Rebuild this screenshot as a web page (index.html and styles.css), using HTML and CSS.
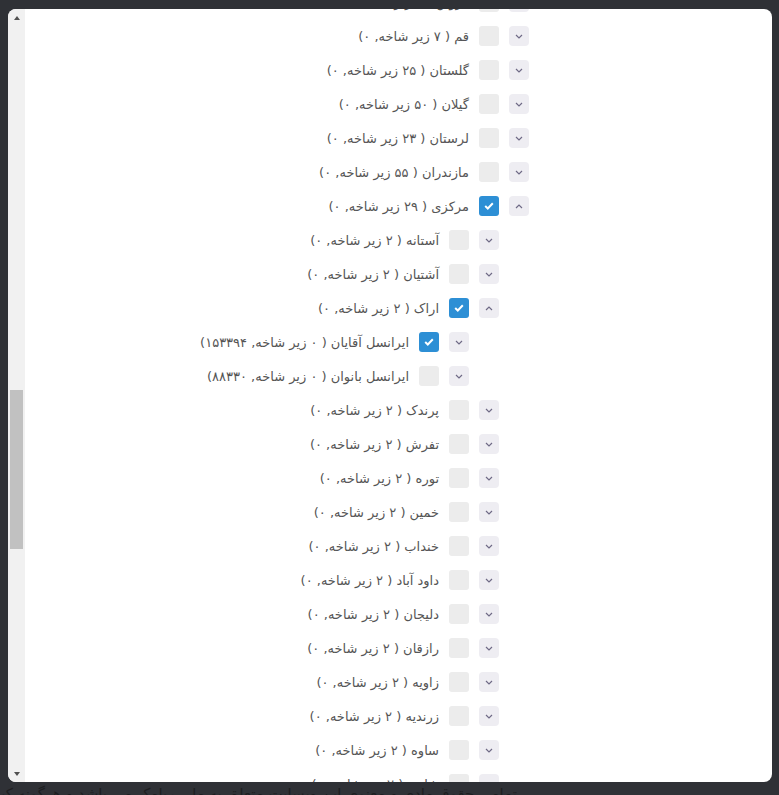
FILE: index.html
```html
<!DOCTYPE html>
<html lang="fa">
<head>
    <meta charset="UTF-8">
    <meta name="viewport" content="width=device-width, initial-scale=1.0">
    <title>انتخاب مناطق</title>
    <link rel="stylesheet" href="styles.css">
</head>
<body>
    <div class="modal">
        <div class="scrollbar">
            <div class="sb-btn"><span class="arrow-up"></span></div>
            <div class="sb-track"><div class="sb-thumb" id="thumb"></div></div>
            <div class="sb-btn"><span class="arrow-down"></span></div>
        </div>
        <div class="tree" id="tree">
            <ul id="tree-root"></ul>
        </div>
    </div>
    <div class="footer">تمامی حقوق مادی و معنوی این وبسایت متعلق به ملی ریامک می باشد و هرگونه کپی برداری پیگرد قانونی دارد</div>

    <script>
        const chevronDown = '<svg width="8" height="5" viewBox="0 0 8 5"><path d="M1 1l3 3 3-3" fill="none" stroke="#6f6a86" stroke-width="1.2"/></svg>';
        const chevronUp = '<svg width="8" height="5" viewBox="0 0 8 5"><path d="M1 4l3-3 3 3" fill="none" stroke="#6f6a86" stroke-width="1.2"/></svg>';
        const tick = '<svg width="10" height="8" viewBox="0 0 10 8"><path d="M1.2 4l2.6 2.5L8.8 1.3" fill="none" stroke="#fff" stroke-width="2"/></svg>';

        // Persian digits
        function fa(n) {
            return String(n).replace(/\d/g, d => '۰۱۲۳۴۵۶۷۸۹'[d]);
        }

        function leaves(names) {
            return names.map(name => ({ name: name, count: 2, value: 0 }));
        }

        const markazi = leaves(['آستانه', 'آشتیان']).concat([
            { name: 'اراک', count: 2, value: 0, open: true, checked: true, children: [
                { name: 'ایرانسل آقایان', count: 0, value: 153394, checked: true },
                { name: 'ایرانسل بانوان', count: 0, value: 88330 }
            ] }
        ], leaves(['پرندک', 'تفرش', 'توره', 'خمین', 'خنداب', 'داود آباد', 'دلیجان', 'رازقان', 'زاویه', 'زرندیه', 'ساوه',
            'شازند', 'شهباز', 'غرق آباد', 'فرمهین', 'قورچی باشی', 'کارچان', 'کمیجان', 'مامونیه', 'محلات', 'میلاجرد', 'نراق', 'نوبران', 'نیمور', 'هندودر', 'خنجین']));

        const provinces = [
            { name: 'آذربایجان شرقی', count: 21, value: 0 },
            { name: 'آذربایجان غربی', count: 17, value: 0 },
            { name: 'اردبیل', count: 10, value: 0 },
            { name: 'اصفهان', count: 17, value: 0, open: true, children: leaves(['آران و بیدگل', 'اردستان', 'اصفهان', 'برخوار', 'تیران', 'چادگان', 'خمینی شهر', 'خوانسار', 'سمیرم', 'شاهین شهر', 'شهرضا', 'فریدن', 'فلاورجان', 'کاشان', 'گلپایگان', 'لنجان', 'نجف آباد']) },
            { name: 'البرز', count: 6, value: 0 },
            { name: 'ایلام', count: 10, value: 0 },
            { name: 'بوشهر', count: 9, value: 0 },
            { name: 'تهران', count: 16, value: 0, open: true, children: leaves(['اسلامشهر', 'بهارستان', 'پاکدشت', 'پردیس', 'پیشوا', 'تهران', 'دماوند', 'رباط کریم', 'ری', 'شمیرانات', 'شهریار', 'فیروزکوه', 'قدس', 'قرچک', 'ملارد', 'ورامین']) },
            { name: 'چهارمحال و بختیاری', count: 10, value: 0 },
            { name: 'خراسان جنوبی', count: 11, value: 0 },
            { name: 'خراسان رضوی', count: 28, value: 0 },
            { name: 'خراسان شمالی', count: 8, value: 0 },
            { name: 'خوزستان', count: 27, value: 0 },
            { name: 'زنجان', count: 8, value: 0 },
            { name: 'سمنان', count: 8, value: 0 },
            { name: 'سیستان و بلوچستان', count: 19, value: 0 },
            { name: 'فارس', count: 36, value: 0 },
            { name: 'قزوین', count: 6, value: 0 },
            { name: 'قم', count: 7, value: 0, id: 'qom' },
            { name: 'گلستان', count: 25, value: 0 },
            { name: 'گیلان', count: 50, value: 0 },
            { name: 'لرستان', count: 23, value: 0 },
            { name: 'مازندران', count: 55, value: 0 },
            { name: 'مرکزی', count: 29, value: 0, open: true, checked: true, children: markazi },
            { name: 'هرمزگان', count: 13, value: 0 },
            { name: 'همدان', count: 9, value: 0, open: true, children: leaves(['اسدآباد', 'بهار', 'تویسرکان', 'رزن', 'فامنین', 'کبودرآهنگ', 'ملایر', 'نهاوند', 'همدان']) },
            { name: 'یزد', count: 10, value: 0 },
            { name: 'کردستان', count: 10, value: 0 },
            { name: 'کرمان', count: 23, value: 0 },
            { name: 'کرمانشاه', count: 14, value: 0 },
            { name: 'کهگیلویه و بویراحمد', count: 8, value: 0 }
        ];

        function buildNode(node) {
            const li = document.createElement('li');
            const row = document.createElement('div');
            row.className = 'row';
            if (node.id) row.id = node.id;
            row.innerHTML =
                '<button class="toggle">' + (node.open ? chevronUp : chevronDown) + '</button>' +
                '<span class="check' + (node.checked ? ' on' : '') + '">' + (node.checked ? tick : '') + '</span>' +
                '<span class="label">' + node.name + ' ( ' + fa(node.count) + ' زیر شاخه, ' + fa(node.value) + ')</span>';
            li.appendChild(row);

            if (node.open && node.children) {
                const ul = document.createElement('ul');
                node.children.forEach(child => ul.appendChild(buildNode(child)));
                li.appendChild(ul);
            }
            return li;
        }

        const root = { name: 'ایران', count: 31, value: 0, open: true, children: provinces };
        document.getElementById('tree-root').appendChild(buildNode(root));

        const tree = document.getElementById('tree');
        tree.scrollTop = document.getElementById('qom').offsetTop - 10;

        // Draw the scrollbar thumb from the scroll position
        function updateThumb() {
            const track = document.querySelector('.sb-track').clientHeight;
            const thumb = document.getElementById('thumb');
            const h = track * tree.clientHeight / tree.scrollHeight;
            const top = (track - h) * tree.scrollTop / (tree.scrollHeight - tree.clientHeight);
            thumb.style.height = h + 'px';
            thumb.style.marginTop = top + 'px';
        }
        tree.addEventListener('scroll', updateThumb);
        updateThumb();
    </script>
</body>
</html>
```

FILE: styles.css
```css
/* Reset and global styles */
* {
    margin: 0;
    padding: 0;
    box-sizing: border-box;
}

html, body {
    height: 100%;
    overflow: hidden;
}

body {
    font-family: "DejaVu Sans", sans-serif;
    background-color: #2f3136;
}

/* Modal */
.modal {
    display: flex;
    margin: 9px 7px 0 8px;
    height: 773px;
    background-color: #ffffff;
    border-radius: 8px;
    overflow: hidden;
}

/* Scrollbar (drawn, sits on the left for rtl content) */
.scrollbar {
    display: flex;
    flex-direction: column;
    flex: 0 0 17px;
    background-color: #f1f1f1;
}

.sb-btn {
    display: flex;
    align-items: center;
    justify-content: center;
    height: 17px;
}

.arrow-up,
.arrow-down {
    width: 0;
    height: 0;
    border-left: 3.5px solid transparent;
    border-right: 3.5px solid transparent;
}

.arrow-up {
    border-bottom: 4px solid #505050;
}

.arrow-down {
    border-top: 4px solid #505050;
}

.sb-track {
    flex: 1;
    padding: 0 2px;
}

.sb-thumb {
    background-color: #c1c1c1;
}

.tree {
    flex: 1;
    height: 100%;
    position: relative;
    overflow-y: scroll;
    scrollbar-width: none;
    direction: rtl;
    padding: 8px 213px 8px 0;
}

.tree::-webkit-scrollbar {
    display: none;
}

/* Tree rows */
.tree ul {
    list-style: none;
}

.tree ul ul {
    padding-right: 30px;
}

.row {
    display: flex;
    align-items: center;
    gap: 10px;
    height: 34px;
}

.toggle {
    display: flex;
    align-items: center;
    justify-content: center;
    width: 20px;
    height: 20px;
    border: none;
    border-radius: 4px;
    background-color: #eeedf2;
    cursor: pointer;
}

.check {
    display: flex;
    align-items: center;
    justify-content: center;
    width: 20px;
    height: 20px;
    border-radius: 3px;
    background-color: #ececec;
}

.check.on {
    background-color: #2d8fd5;
}

.label {
    font-size: 13px;
    color: #555;
    white-space: nowrap;
}

/* Page footer behind the modal */
.footer {
    width: 517px;
    direction: rtl;
    white-space: nowrap;
    overflow: hidden;
    padding-top: 3px;
    font-size: 15px;
    color: #1d1e21;
}
```
